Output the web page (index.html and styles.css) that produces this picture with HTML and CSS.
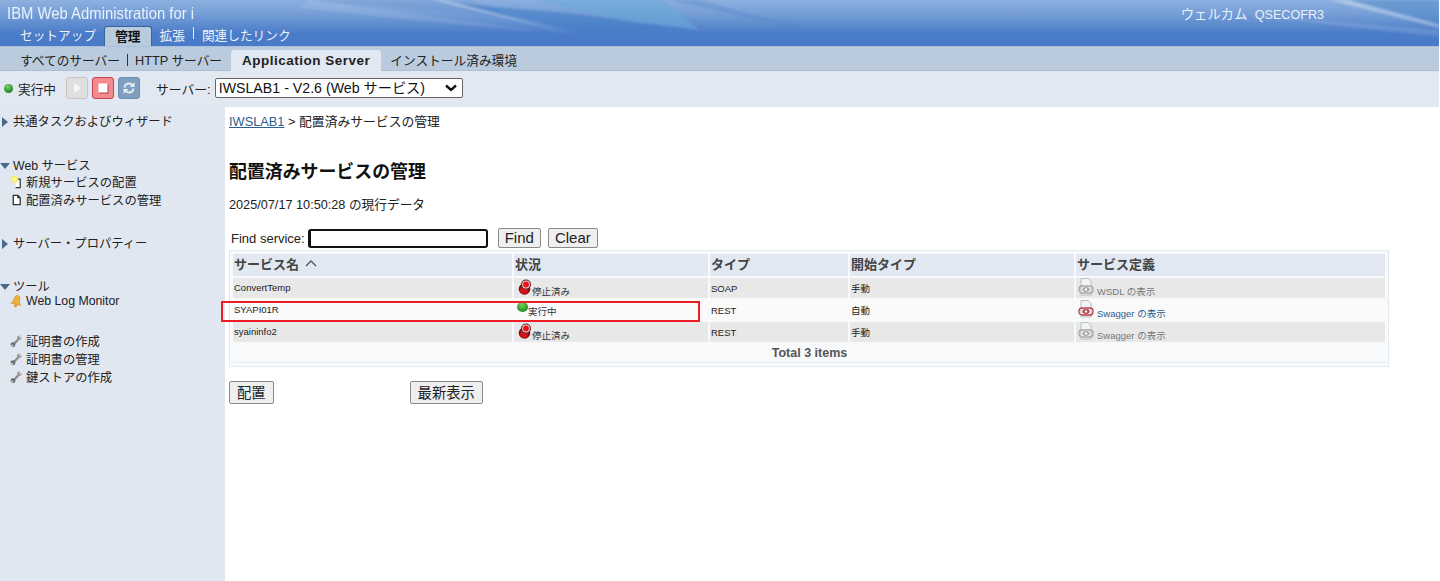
FILE: index.html
```html
<!DOCTYPE html>
<html>
<head>
<meta charset="utf-8">
<title>IBM Web Administration for i</title>
<link rel="stylesheet" href="styles.css">
</head>
<body>
    <div class="banner">
        <svg class="swoosh" viewBox="0 0 1440 46" preserveAspectRatio="none">
            <path d="M310 0 L550 32 L430 22 L300 8Z" fill="#ffffff" opacity=".1"/>
            <path d="M310 0 L470 0 L520 18Z" fill="#4a7fc0" opacity=".2"/>
            <path d="M460 4 L567 13 L700 30 L583 32Z" fill="#3f7cc4" opacity=".55"/>
            <path d="M533 0 L663 0 L700 30 L633 22Z" fill="#69a8d8" opacity=".6"/>
            <path d="M433 0 L445 0 L583 37Z" fill="#ffffff" opacity=".3"/>
            <path d="M667 0 L700 0 L800 28Z" fill="#4a7fc0" opacity=".3"/>
            <path d="M1330 0 L1350 0 L1440 24 L1440 28Z" fill="#ffffff" opacity=".3"/>
            <path d="M1350 0 L1440 0 L1440 24Z" fill="#4a86c4" opacity=".45"/>
            <path d="M1240 14 L1440 30 L1440 37Z" fill="#ffffff" opacity=".12"/>
        </svg>
        <div class="banner-top">
            <span class="product">IBM Web Administration for i</span>
            <span class="welcome">ウェルカム&nbsp; <span class="user">QSECOFR3</span></span>
        </div>
        <div class="main-tabs">
            <a class="main-tab">セットアップ</a>
            <a class="main-tab current">管理</a>
            <a class="main-tab">拡張</a>
            <span class="tab-sep"></span>
            <a class="main-tab">関連したリンク</a>
        </div>
    </div>
    <div class="sub-tabs">
        <a class="sub-tab">すべてのサーバー</a>
        <span class="sub-sep"></span>
        <a class="sub-tab">HTTP サーバー</a>
        <a class="sub-tab current">Application Server</a>
        <a class="sub-tab">インストール済み環境</a>
    </div>
    <div class="toolbar">
        <span class="dot-green"></span>
        <span class="run-label">実行中</span>
        <span class="tool-btn start"><svg viewBox="0 0 22 22"><path d="M8 5 L15 11 L8 17Z" fill="#f6f6f6"/></svg></span>
        <span class="tool-btn stop"><svg viewBox="0 0 22 22"><rect x="7" y="7" width="10" height="10" fill="#a8323a"/><rect x="6" y="6" width="10" height="10" fill="#fff"/></svg></span>
        <span class="tool-btn refresh"><svg viewBox="0 0 22 22"><path d="M5 10 A6 6 0 0 1 15 6.500 L17 4.500 L17 10 L11.500 10 L13.500 8 A4 4 0 0 0 7 11Z M17 12 A6 6 0 0 1 7 15.500 L5 17.500 L5 12 L10.500 12 L8.500 14 A4 4 0 0 0 15 11Z" fill="#e6edf4"/></svg></span>
        <label class="server-label">サーバー:</label>
        <select class="server-select"><option>IWSLAB1 - V2.6 (Web サービス)</option></select>
    </div>
    <div class="page">
        <div class="sidebar">
            <div class="nav-group first">
                <div class="nav-head"><span class="arrow-right"></span>共通タスクおよびウィザード</div>
            </div>
            <div class="nav-group web">
                <div class="nav-head"><span class="arrow-down"></span>Web サービス</div>
                <div class="nav-item">
                    <svg class="nav-icon" viewBox="0 0 14 14"><path d="M6 4 H11 V13 H6" fill="#fff" stroke="#333" stroke-width="1.300"/><circle cx="5" cy="4" r="3.800" fill="#f4f060"/><circle cx="5" cy="4" r="1.800" fill="#fbf9b0"/></svg>
                    新規サービスの配置
                </div>
                <div class="nav-item">
                    <svg class="nav-icon" viewBox="0 0 14 14"><path d="M3.500 2 H8.500 L11 4.500 V12 H3.500Z M8.500 2 V4.500 H11" fill="#fff" stroke="#333" stroke-width="1.400"/></svg>
                    配置済みサービスの管理
                </div>
            </div>
            <div class="nav-group">
                <div class="nav-head"><span class="arrow-right"></span>サーバー・プロパティー</div>
            </div>
            <div class="nav-group tools">
                <div class="nav-head"><span class="arrow-down"></span>ツール</div>
                <div class="nav-item">
                    <svg class="nav-icon" viewBox="0 0 14 14"><path d="M7 1 C9.500 1 10 3 10 5 C10 8 11 9 12.500 10.500 L1.500 10.500 C3 9 4 8 4 5 C4 3 4.500 1 7 1Z" fill="#f0b13c" stroke="#c98a22" stroke-width=".6" transform="rotate(14 7 7)"/><circle cx="6" cy="12" r="1.700" fill="#e09a2a"/></svg>
                    Web Log Monitor
                </div>
            </div>
            <div class="nav-group">
                <div class="nav-item"><svg class="nav-icon" viewBox="0 0 14 14"><use href="#wrench"/></svg>証明書の作成</div>
                <div class="nav-item"><svg class="nav-icon" viewBox="0 0 14 14"><use href="#wrench"/></svg>証明書の管理</div>
                <div class="nav-item"><svg class="nav-icon" viewBox="0 0 14 14"><use href="#wrench"/></svg>鍵ストアの作成</div>
            </div>
        </div>
        <div class="content">
            <div class="crumb"><a href="#">IWSLAB1</a> &gt; 配置済みサービスの管理</div>
            <h1>配置済みサービスの管理</h1>
            <p class="stamp">2025/07/17 10:50:28 の現行データ</p>
            <div class="find-row">
                <label>Find service:</label>
                <input class="find-input" type="text">
                <button class="btn find-btn">Find</button>
                <button class="btn">Clear</button>
            </div>
            <div class="table-wrap">
                <table class="services">
                    <colgroup><col class="c1"><col class="c2"><col class="c3"><col class="c4"><col class="c5"></colgroup>
                    <thead>
                        <tr><th>サービス名 <svg class="sort" viewBox="0 0 12 8"><path d="M1 7 L6 2 L11 7" fill="none" stroke="#555" stroke-width="1.300"/></svg></th><th>状況</th><th>タイプ</th><th>開始タイプ</th><th>サービス定義</th></tr>
                    </thead>
                    <tbody>
                        <tr class="odd">
                            <td class="name">ConvertTemp</td>
                            <td><svg class="led-red" viewBox="0 0 14 16"><use href="#ledred"/></svg><span class="status">停止済み</span></td>
                            <td>SOAP</td><td>手動</td>
                            <td><svg class="doc off" viewBox="0 0 16 18"><use href="#xmlfile"/></svg><span class="def off">WSDL の表示</span></td>
                        </tr>
                        <tr>
                            <td class="name">SYAPI01R</td>
                            <td><span class="led-green"></span><span class="status">実行中</span></td>
                            <td>REST</td><td>自動</td>
                            <td><svg class="doc on" viewBox="0 0 16 18"><use href="#xmlfile"/></svg><span class="def">Swagger の表示</span></td>
                        </tr>
                        <tr class="odd">
                            <td class="name">syaininfo2</td>
                            <td><svg class="led-red" viewBox="0 0 14 16"><use href="#ledred"/></svg><span class="status">停止済み</span></td>
                            <td>REST</td><td>手動</td>
                            <td><svg class="doc off" viewBox="0 0 16 18"><use href="#xmlfile"/></svg><span class="def off">Swagger の表示</span></td>
                        </tr>
                    </tbody>
                    <tfoot>
                        <tr><td colspan="5">Total 3 items</td></tr>
                    </tfoot>
                </table>
                <div class="highlight"></div>
            </div>
            <div class="actions">
                <button class="btn">配置</button>
                <button class="btn refresh-btn">最新表示</button>
            </div>
        </div>
    </div>
    <svg class="defs" width="0" height="0">
        <defs>
            <g id="wrench">
                <path d="M4 10.500 L9.500 4.500" stroke="#8a8a8a" stroke-width="2.400" fill="none"/>
                <circle cx="10" cy="3.500" r="2.500" fill="#9a9a9a"/>
                <circle cx="3.200" cy="11" r="2.600" fill="#6e6e6e"/>
                <circle cx="11.200" cy="2.400" r="1.100" fill="#e1e7f0"/>
                <circle cx="2.400" cy="12" r="1" fill="#e1e7f0"/>
            </g>
            <g id="xmlfile">
                <path d="M3 .5 H10 L13 3.500 V17 H3Z" fill="#f2f5f7" stroke="#a8b0b4" stroke-width=".8"/>
                <rect x="1" y="8" width="14" height="7" rx="3" fill="none" stroke="currentColor" stroke-width="1.300"/>
                <ellipse cx="8" cy="11.500" rx="3.500" ry="2.400" fill="currentColor"/>
                <circle cx="8" cy="11.500" r="1.200" fill="#fff"/>
            </g>
            <g id="ledred">
                <circle cx="6.500" cy="10" r="5.800" fill="#8a0c10"/>
                <circle cx="6" cy="11" r="3.800" fill="#d8141a"/>
                <circle cx="8" cy="5.500" r="5" fill="#5a2a2e"/>
                <circle cx="8" cy="5.500" r="3.900" fill="#e8d0d0"/>
                <circle cx="8" cy="5.500" r="2.900" fill="#f0101a"/>
            </g>
        </defs>
    </svg>
</body>
</html>
```

FILE: styles.css
```css
body { margin: 0; padding-right: 1px; font-family: "Liberation Sans", "Noto Sans CJK JP", sans-serif; font-size: 13px; color: #222; background: #fff; min-height: 581px; overflow: hidden; }
.defs { position: absolute; }

/* banner */
.banner {
    position: relative;
    height: 46px;
    background: linear-gradient(#8cb0df 0, #79a1d8 12px, #5f8ccf 24px, #4a7bc8 34px, #4a7bc8 100%);
    overflow: hidden;
}
.swoosh { position: absolute; top: 0; left: 0; width: 100%; height: 100%; filter: blur(1px); }
.banner-top { position: relative; display: flex; justify-content: space-between; height: 26px; padding: 4px 115px 0 7px; box-sizing: border-box; color: #e9f0fa; }
.product { font-family: "Liberation Sans Narrow", "Liberation Sans", sans-serif; font-size: 16.5px; line-height: 18px; transform: scaleX(.9); transform-origin: left; white-space: nowrap; }
.welcome { font-size: 13.4px; line-height: 22px; }
.user { font-size: 12.6px; }
.main-tabs { position: relative; display: flex; align-items: flex-end; height: 20px; padding-left: 12px; }
.main-tab { padding: 0 8px; font-size: 12.7px; line-height: 20px; color: #eef3fb; }
.main-tab.current { margin: 0; padding: 0 10px; height: 19px; border: 1px solid #38639f; border-bottom: 0; border-radius: 3px 3px 0 0; background: #b9ccdd; color: #111; font-weight: 700; line-height: 21px; }
.tab-sep { width: 1px; height: 12px; margin: 0 0 7px 0; background: #e4ecf7; }

/* second row */
.sub-tabs { display: flex; align-items: flex-end; height: 25px; padding-left: 13px; background: #b9cbdc; border-top: 1px solid #a9c0de; border-bottom: 1px solid #aebfd3; box-sizing: border-box; }
.sub-tab { padding: 0 7px; font-size: 12.7px; line-height: 17px; color: #222; }
.sub-tab.current { margin: 0 2px -1px 2px; padding: 0 11px; background: #e1e8f1; font-size: 13.5px; font-weight: 700; letter-spacing: .5px; border-radius: 3px 3px 0 0; height: 21px; line-height: 21px; }
.sub-sep { width: 1px; height: 12px; margin: 0 0 4px 0; background: #333; }

/* toolbar */
.toolbar { display: flex; align-items: center; height: 36px; background: #e1e8f1; box-sizing: border-box; padding: 0 0 2px 4px; }
.dot-green { width: 9px; height: 9px; border-radius: 50%; background: radial-gradient(circle at 40% 30%, #7fd06a, #1f8a24 70%); margin-right: 5px; }
.run-label { font-size: 12.7px; margin-right: 10px; }
.tool-btn { width: 22px; height: 22px; margin-right: 4px; border-radius: 3px; box-sizing: border-box; border: 1px solid #bbb; }
.tool-btn svg { display: block; width: 100%; height: 100%; }
.tool-btn.start { background: #dfdfdf; border-color: #c6c6c6; }
.tool-btn.stop { background: #f58a8e; border-color: #c0444c; }
.tool-btn.refresh { background: #7f9fc0; border-color: #6c8cad; margin-right: 0; }
.server-label { margin-left: 16px; font-size: 12.8px; color: #222; }
.server-select {
    appearance: none;
    margin-left: 4px;
    width: 248px;
    height: 20px;
    font-family: "Liberation Sans", "Noto Sans CJK JP", sans-serif;
    font-size: 14.2px;
    padding: 0 0 0 3px;
    color: #111;
    background: #fff url("data:image/svg+xml,%3Csvg xmlns='http://www.w3.org/2000/svg' width='14' height='8'%3E%3Cpath d='M2 1.500 L7 6 L12 1.500' fill='none' stroke='%23111' stroke-width='2.400'/%3E%3C/svg%3E") no-repeat right 4px center;
    border: 1px solid #666;
    border-radius: 2px;
}

/* page body */
.page { display: flex; min-height: 474px; }
.sidebar { width: 225px; flex: none; background: #e1e7f0; padding-top: 6px; box-sizing: border-box; }
.nav-group { padding-bottom: 25px; }
.nav-group.first { padding-bottom: 26px; }
.nav-group.web { padding-bottom: 26px; }
.nav-group.tools { padding-bottom: 22px; }
.nav-head { display: flex; align-items: center; height: 18px; padding-left: 2px; font-size: 12.3px; line-height: 18px; color: #222; }
.nav-head + .nav-item { margin-top: -2px; }
.tools .nav-head + .nav-item { margin-top: -4px; }
.arrow-right { width: 0; height: 0; margin: 0 5px 0 0; border-left: 6px solid #4a6a8c; border-top: 5px solid transparent; border-bottom: 5px solid transparent; }
.arrow-down { width: 0; height: 0; margin: 0 3px 0 -2px; border-top: 6px solid #4a6a8c; border-left: 5px solid transparent; border-right: 5px solid transparent; }
.nav-item { display: flex; align-items: center; height: 18px; padding-left: 10px; font-size: 12.3px; color: #222; gap: 3px; }
.nav-icon { width: 13px; height: 14px; flex: none; }

.content { flex: 1; padding: 6px 50px 0 4px; min-width: 0; }
.crumb { font-size: 12.8px; line-height: 18px; }
.crumb a { color: #2c5f92; }
h1 { margin: 29px 0 0; font-size: 17.9px; line-height: 24px; font-weight: 700; color: #111; }
.stamp { margin: 12px 0 0; font-size: 12.7px; line-height: 18px; }

.find-row { display: flex; align-items: center; margin-top: 13px; height: 22px; padding-left: 2px; font-size: 13px; }
.find-input { width: 180px; height: 19px; margin: 0 0 0 3px; box-sizing: border-box; border: 2px solid #111; border-radius: 3px; outline: none; background: #fff; border-left-width: 3px; }
.btn { height: 20px; padding: 0 6px; font-family: "Liberation Sans", "Noto Sans CJK JP", sans-serif; font-size: 15px; line-height: 16px; color: #222; background: #efefef; border: 1px solid #8a8a8a; border-radius: 2px; }
.find-btn { margin: 0 7px 0 10px; }

.table-wrap { position: relative; margin-top: 1px; border: 1px solid #e3e9f1; padding: 1px; background: #f8f9fa; }
.services { width: 100%; table-layout: fixed; border-collapse: separate; border-spacing: 2px; }
.c1 { width: 279px; }
.c2 { width: 194px; }
.c3 { width: 138px; }
.c4 { width: 224px; }
.services th { height: 22px; padding: 0 1px 3px; box-sizing: border-box; background: #e1e8f1; text-align: left; font-size: 13px; font-weight: 700; color: #444; }
.sort { width: 12px; height: 8px; margin-left: 2px; vertical-align: 2px; }
.services td { height: 20px; padding: 0 1px; font-size: 9.5px; color: #222; background: #fafafa; white-space: nowrap; }
.services td.name { padding-bottom: 2px; box-sizing: border-box; }
.services tr.odd td { background: #e8e8e8; }
.services tfoot td { height: 18px; text-align: center; font-size: 12.5px; font-weight: 700; color: #555; background: #f8f9fa; border-bottom: 1px solid #e8ecf1; padding-right: 0; }
.led-red { width: 14px; height: 16px; margin-left: 3px; vertical-align: 0; }
.led-green { display: inline-block; width: 11px; height: 10px; border-radius: 50%; margin-left: 2px; vertical-align: 3px; background: radial-gradient(circle at 45% 30%, #7ed25e, #1d8a1f 75%); }
.status { font-size: 9.5px; color: #333; }
.doc { width: 16px; height: 18px; vertical-align: -1px; margin-right: 3px; margin-left: 1px; }
.doc.off { color: #a8a8a8; }
.doc.on { color: #b8404e; }
.def { color: #2a5a8f; font-size: 9.5px; }
.def.off { color: #777; }

.highlight { position: absolute; left: -9px; top: 50px; width: 479px; height: 21px; box-sizing: border-box; border: 2px solid #ee1c25; pointer-events: none; }

.actions { display: flex; margin-top: 14px; }
.actions .btn { height: 23px; padding: 0 7px; font-size: 14.3px; }
.refresh-btn { margin-left: 136px; }
```
